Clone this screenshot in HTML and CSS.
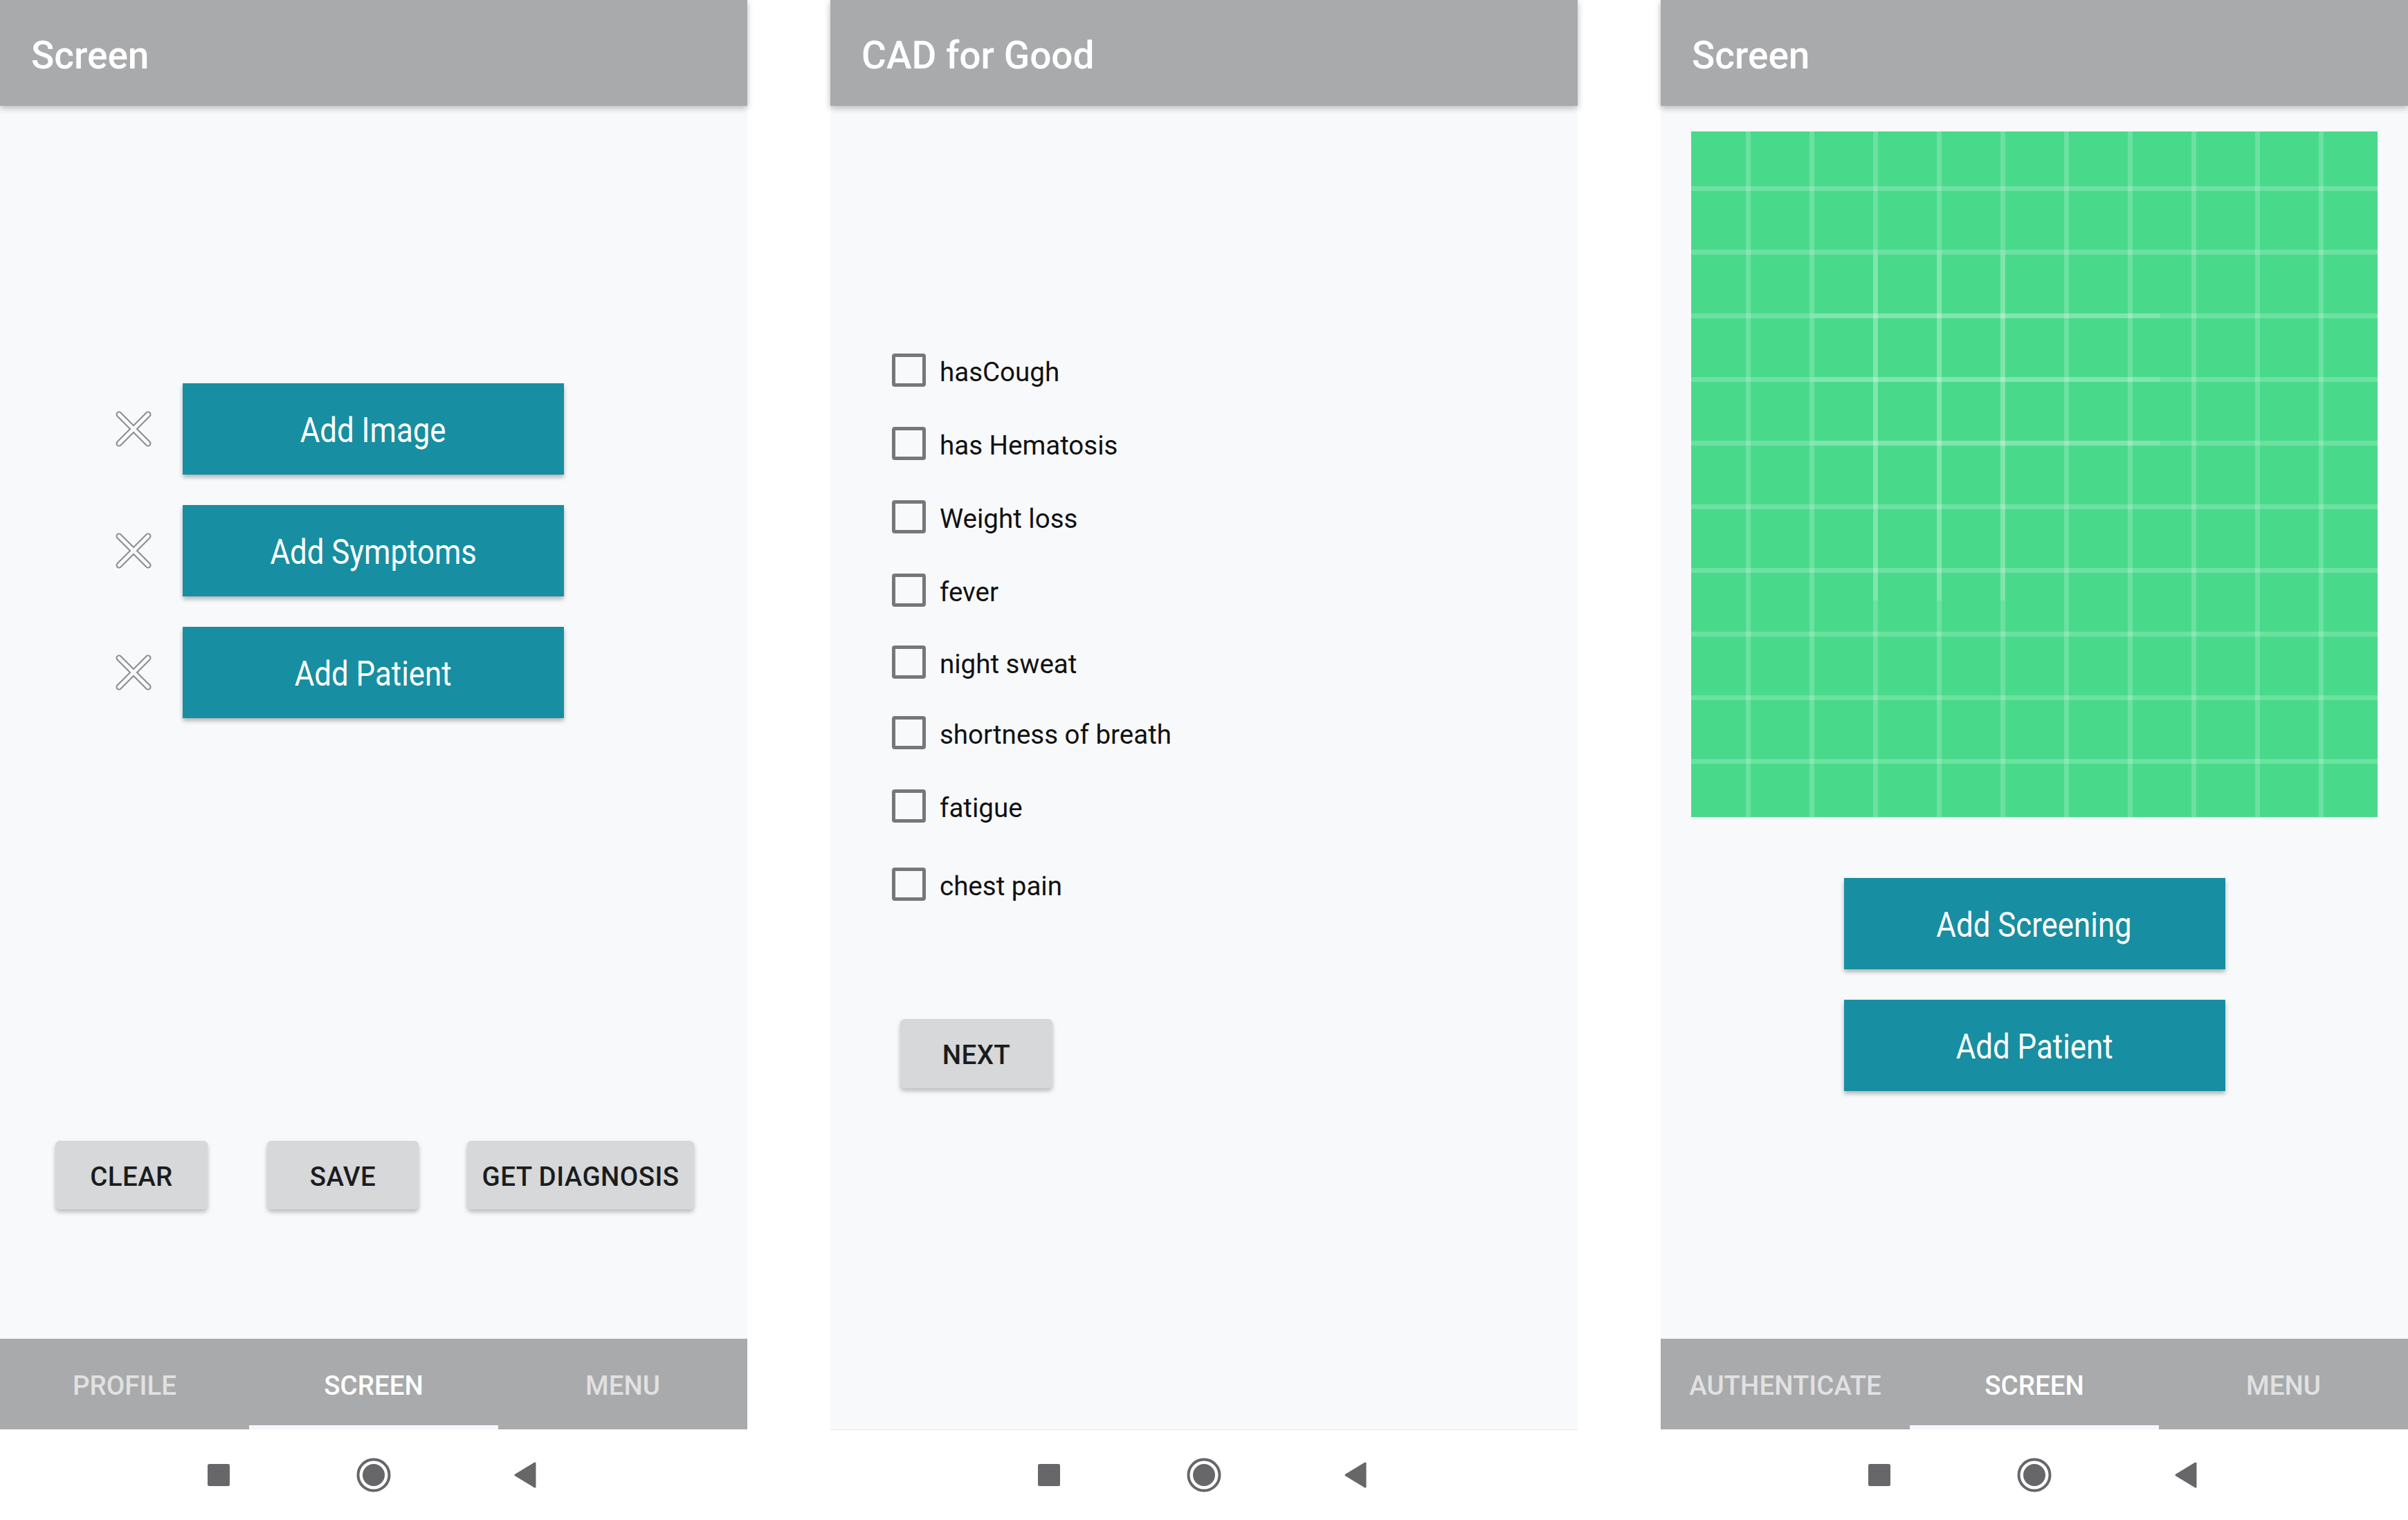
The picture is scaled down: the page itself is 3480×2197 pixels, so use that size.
FILE: index.html
```html
<!DOCTYPE html>
<html>
<head>
<meta charset="utf-8">
<link rel="stylesheet" href="styles.css">
</head>
<body>
<div class="stage">

  <section class="phone">
    <header class="appbar"><h1 class="title">Screen</h1></header>
    <main class="content content-actions">
      <div class="action-list">
        <div class="action-row">
          <svg class="xicon" viewBox="0 0 52 52" width="52" height="52"><g stroke-linecap="round"><path d="M5 5 L47 47 M47 5 L5 47" stroke="#8c8c8c" stroke-width="9"/><path d="M5 5 L47 47 M47 5 L5 47" stroke="#f8f9fa" stroke-width="5"/></g></svg>
          <div class="teal-btn"><span class="cond">Add Image</span></div>
        </div>
        <div class="action-row">
          <svg class="xicon" viewBox="0 0 52 52" width="52" height="52"><g stroke-linecap="round"><path d="M5 5 L47 47 M47 5 L5 47" stroke="#8c8c8c" stroke-width="9"/><path d="M5 5 L47 47 M47 5 L5 47" stroke="#f8f9fa" stroke-width="5"/></g></svg>
          <div class="teal-btn"><span class="cond">Add Symptoms</span></div>
        </div>
        <div class="action-row">
          <svg class="xicon" viewBox="0 0 52 52" width="52" height="52"><g stroke-linecap="round"><path d="M5 5 L47 47 M47 5 L5 47" stroke="#8c8c8c" stroke-width="9"/><path d="M5 5 L47 47 M47 5 L5 47" stroke="#f8f9fa" stroke-width="5"/></g></svg>
          <div class="teal-btn"><span class="cond">Add Patient</span></div>
        </div>
      </div>
      <div class="bottom-buttons">
        <div class="grey-btn btn-clear">CLEAR</div>
        <div class="grey-btn btn-save">SAVE</div>
        <div class="grey-btn btn-diag">GET DIAGNOSIS</div>
      </div>
    </main>
    <nav class="tabs">
      <div class="tab">PROFILE</div>
      <div class="tab active">SCREEN</div>
      <div class="tab">MENU</div>
    </nav>
    <div class="sysnav">
      <svg class="nav-sq" width="32" height="32" viewBox="0 0 32 32"><rect width="32" height="32" rx="2.5" fill="#67676a"/></svg>
      <svg class="nav-home" width="50" height="50" viewBox="0 0 50 50"><circle cx="25" cy="25" r="22.5" fill="none" stroke="#67676a" stroke-width="4"/><circle cx="25" cy="25" r="16" fill="#67676a"/></svg>
      <svg class="nav-back" width="34" height="40" viewBox="0 0 34 40"><path d="M3 20 L31 3 L31 37 Z" fill="#67676a" stroke="#67676a" stroke-width="3" stroke-linejoin="round"/></svg>
    </div>
  </section>

  <section class="phone phone-mid">
    <header class="appbar"><h1 class="title">CAD for Good</h1></header>
    <main class="content content-checks">
      <div class="check-list">
        <div class="check-row"><span class="box"></span><span class="label">hasCough</span></div>
        <div class="check-row"><span class="box"></span><span class="label">has Hematosis</span></div>
        <div class="check-row"><span class="box"></span><span class="label">Weight loss</span></div>
        <div class="check-row"><span class="box"></span><span class="label">fever</span></div>
        <div class="check-row"><span class="box"></span><span class="label">night sweat</span></div>
        <div class="check-row"><span class="box"></span><span class="label">shortness of breath</span></div>
        <div class="check-row"><span class="box"></span><span class="label">fatigue</span></div>
        <div class="check-row"><span class="box"></span><span class="label">chest pain</span></div>
      </div>
      <div class="grey-btn btn-next">NEXT</div>
    </main>
    <div class="sysnav sysnav-line">
      <svg class="nav-sq" width="32" height="32" viewBox="0 0 32 32"><rect width="32" height="32" rx="2.5" fill="#67676a"/></svg>
      <svg class="nav-home" width="50" height="50" viewBox="0 0 50 50"><circle cx="25" cy="25" r="22.5" fill="none" stroke="#67676a" stroke-width="4"/><circle cx="25" cy="25" r="16" fill="#67676a"/></svg>
      <svg class="nav-back" width="34" height="40" viewBox="0 0 34 40"><path d="M3 20 L31 3 L31 37 Z" fill="#67676a" stroke="#67676a" stroke-width="3" stroke-linejoin="round"/></svg>
    </div>
  </section>

  <section class="phone phone-right">
    <header class="appbar"><h1 class="title">Screen</h1></header>
    <main class="content content-screen">
      <svg class="grid-img" width="992" height="991" viewBox="0 0 992 991">
        <rect width="992" height="991" fill="#48da8a"/>
        <g fill="#ffffff" fill-opacity="0.2">
          <rect x="79" y="0" width="7" height="991"/>
          <rect x="171" y="0" width="7" height="991"/>
          <rect x="263" y="0" width="7" height="991"/>
          <rect x="355" y="0" width="7" height="991"/>
          <rect x="447" y="0" width="7" height="991"/>
          <rect x="539" y="0" width="7" height="991"/>
          <rect x="631" y="0" width="7" height="991"/>
          <rect x="723" y="0" width="7" height="991"/>
          <rect x="815" y="0" width="7" height="991"/>
          <rect x="907" y="0" width="7" height="991"/>
          <rect x="0" y="79" width="992" height="7"/>
          <rect x="0" y="171" width="992" height="7"/>
          <rect x="0" y="263" width="992" height="7"/>
          <rect x="0" y="355" width="992" height="7"/>
          <rect x="0" y="447" width="992" height="7"/>
          <rect x="0" y="539" width="992" height="7"/>
          <rect x="0" y="631" width="992" height="7"/>
          <rect x="0" y="723" width="992" height="7"/>
          <rect x="0" y="815" width="992" height="7"/>
          <rect x="0" y="907" width="992" height="7"/>
        </g>
        <g fill="#ffffff" fill-opacity="0.14">
          <rect x="263" y="178" width="7" height="500"/>
          <rect x="355" y="178" width="7" height="500"/>
          <rect x="447" y="178" width="7" height="500"/>
          <rect x="178" y="263" width="500" height="7"/>
          <rect x="178" y="355" width="500" height="7"/>
          <rect x="178" y="447" width="500" height="7"/>
        </g>
      </svg>
      <div class="teal-btn"><span class="cond">Add Screening</span></div>
      <div class="teal-btn"><span class="cond">Add Patient</span></div>
    </main>
    <nav class="tabs">
      <div class="tab">AUTHENTICATE</div>
      <div class="tab active">SCREEN</div>
      <div class="tab">MENU</div>
    </nav>
    <div class="sysnav">
      <svg class="nav-sq" width="32" height="32" viewBox="0 0 32 32"><rect width="32" height="32" rx="2.5" fill="#67676a"/></svg>
      <svg class="nav-home" width="50" height="50" viewBox="0 0 50 50"><circle cx="25" cy="25" r="22.5" fill="none" stroke="#67676a" stroke-width="4"/><circle cx="25" cy="25" r="16" fill="#67676a"/></svg>
      <svg class="nav-back" width="34" height="40" viewBox="0 0 34 40"><path d="M3 20 L31 3 L31 37 Z" fill="#67676a" stroke="#67676a" stroke-width="3" stroke-linejoin="round"/></svg>
    </div>
  </section>

</div>
</body>
</html>
```

FILE: styles.css
```css
* { box-sizing: border-box; }
html, body { margin: 0; padding: 0; background: #ffffff; }
body { font-family: Roboto, "Liberation Sans", sans-serif; }

.stage {
  width: 3480px;
  height: 2197px;
  display: flex;
  gap: 120px;
  overflow: hidden;
}

.phone {
  width: 1080px;
  height: 2197px;
  display: flex;
  flex-direction: column;
  background: #f8f9fa;
  flex: none;
}

.appbar {
  height: 153px;
  flex: none;
  background: #a9aaac;
  display: flex;
  align-items: center;
  padding: 6px 0 0 45px;
  box-shadow: 0 3px 9px rgba(0, 0, 0, 0.28);
  position: relative;
  z-index: 2;
}
.title {
  margin: 0;
  font-size: 55px;
  font-weight: 500;
  color: #ffffff;
}

.content {
  flex: 1;
  display: flex;
  flex-direction: column;
  min-height: 0;
}

/* left screen */
.content-actions { padding-top: 401px; }
.action-list {
  display: flex;
  flex-direction: column;
  gap: 44px;
}
.action-row {
  display: flex;
  align-items: center;
  padding-left: 167px;
}
.xicon { flex: none; margin-right: 45px; }

.teal-btn {
  width: 551px;
  height: 132px;
  flex: none;
  background: #178ea2;
  color: #ffffff;
  display: flex;
  align-items: center;
  justify-content: center;
  padding-top: 3px;
  font-size: 49.5px;
  box-shadow: 0 4px 6px rgba(0, 0, 0, 0.28);
}
.cond {
  display: inline-block;
  transform: scaleX(0.885);
  white-space: nowrap;
}

.bottom-buttons {
  display: flex;
  margin-top: 611px;
  padding-left: 80px;
}
.grey-btn {
  height: 99px;
  background: #d6d8da;
  border-radius: 6px;
  display: flex;
  align-items: center;
  justify-content: center;
  padding-top: 3px;
  font-size: 38.5px;
  font-weight: 500;
  letter-spacing: 0.4px;
  color: #1b1c1d;
  box-shadow: 0 4px 6px rgba(0, 0, 0, 0.25);
  flex: none;
}
.btn-clear { width: 220px; }
.btn-save { width: 219px; margin-left: 86px; }
.btn-diag { width: 328px; margin-left: 70px; }

.tabs {
  height: 131px;
  flex: none;
  background: #a9aaac;
  display: grid;
  grid-template-columns: 1fr 1fr 1fr;
}
.tab {
  display: flex;
  align-items: center;
  justify-content: center;
  padding-top: 3px;
  font-size: 38.5px;
  font-weight: 500;
  color: rgba(255, 255, 255, 0.68);
}
.tab.active {
  color: #ffffff;
  box-shadow: inset 0 -6px 0 #f5f7fa;
}

.sysnav {
  height: 131px;
  flex: none;
  background: #ffffff;
  display: flex;
  align-items: center;
  padding-left: 300px;
}
.sysnav-line {
  border-top: 1px solid #e3e4e6;
}
.nav-sq { flex: none; }
.nav-home { flex: none; margin-left: 183px; }
.nav-back { flex: none; margin-left: 177px; }

/* middle screen */
.content-checks { padding-top: 358px; }
.check-list {
  display: flex;
  flex-direction: column;
  gap: 58px;
  padding-left: 89px;
}
.check-row {
  display: flex;
  align-items: center;
  height: 48px;
}
.check-row:nth-child(5) { margin-top: -2px; }
.check-row:nth-child(6) { margin-top: -4px; }
.check-row:nth-child(8) { margin-top: 7px; }
.box {
  width: 49px;
  height: 48px;
  border: 5px solid #777778;
  border-radius: 4px;
  flex: none;
}
.label {
  margin-left: 20px;
  padding-top: 4px;
  font-size: 38.5px;
  color: #111111;
  white-space: nowrap;
}
.btn-next {
  width: 220px;
  height: 100px;
  margin-top: 171px;
  margin-left: 101px;
}

/* right screen */
.content-screen {
  padding-top: 37px;
  align-items: center;
}
.grid-img { display: block; flex: none; }
.content-screen .teal-btn { margin-top: 44px; }
.content-screen .teal-btn:first-of-type { margin-top: 88px; }
```
